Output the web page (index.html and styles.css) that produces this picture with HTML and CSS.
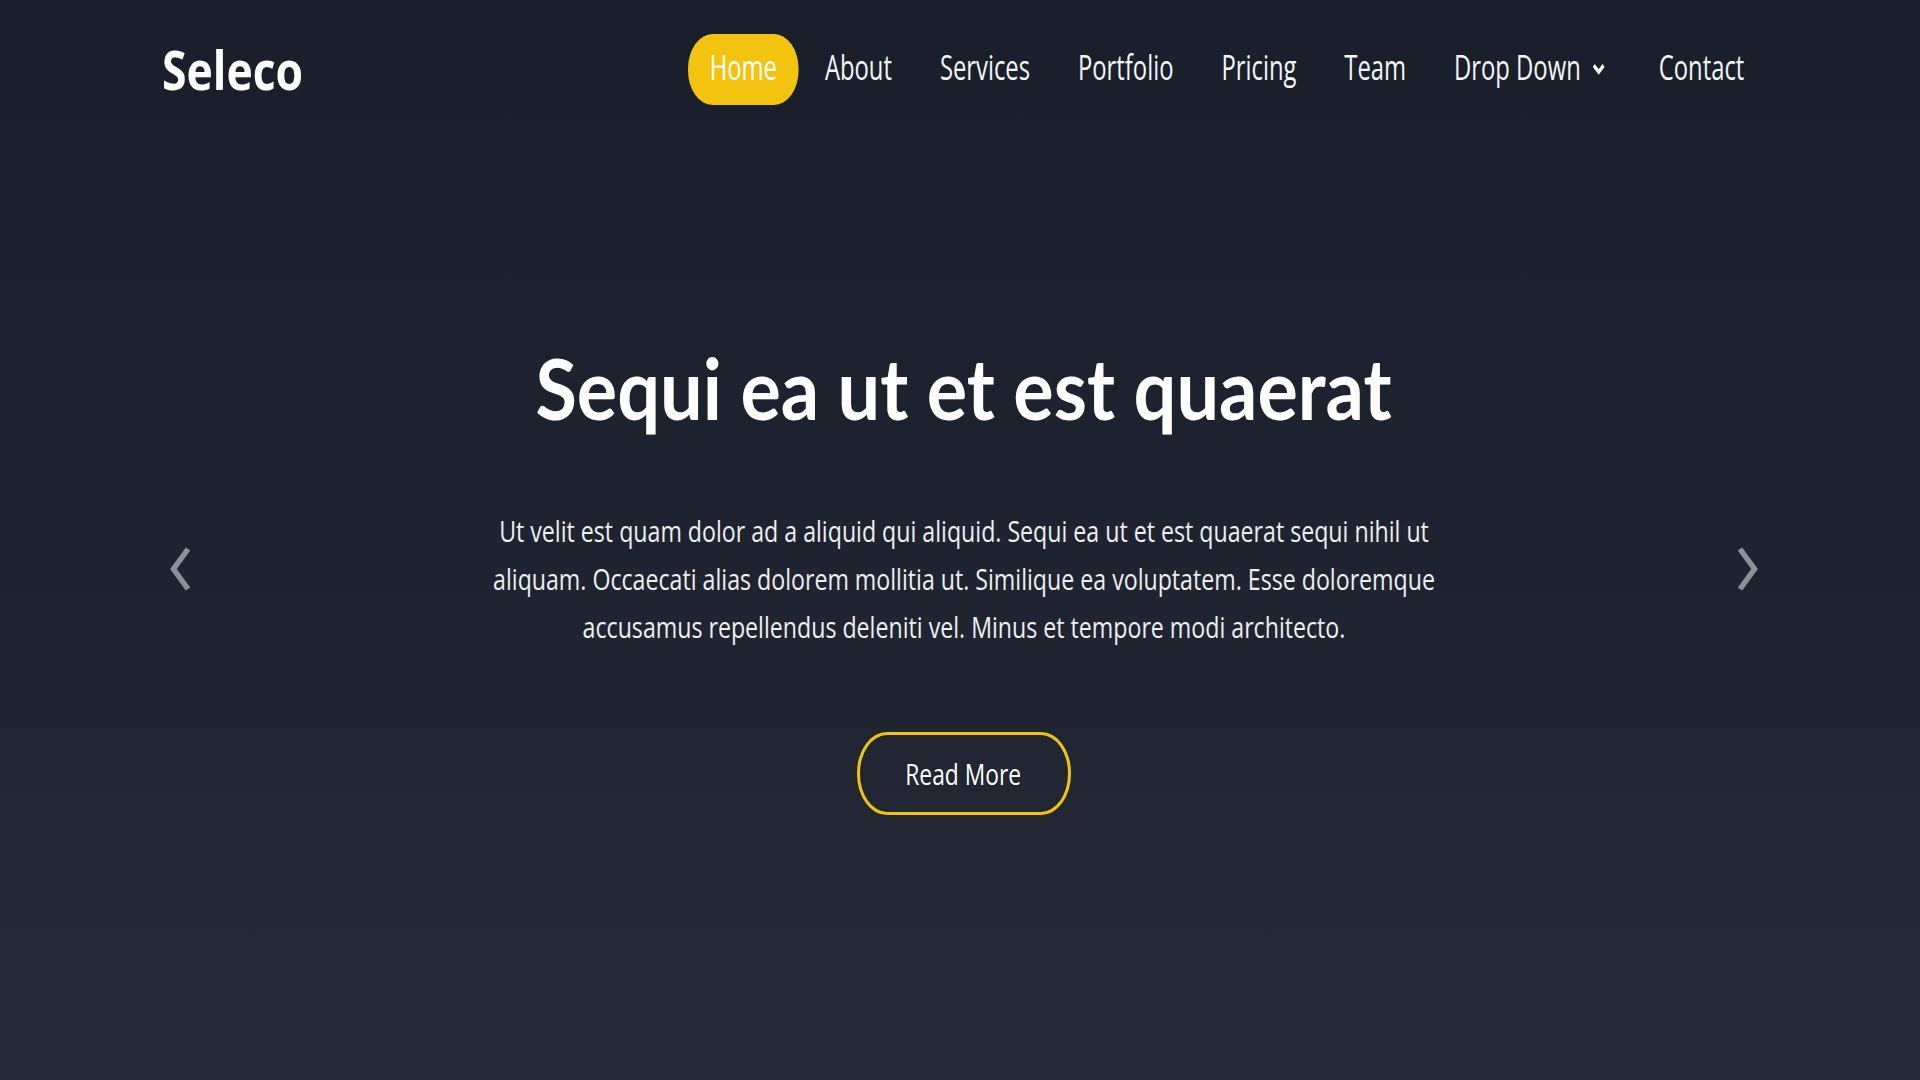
FILE: index.html
```html
<!DOCTYPE html>
<html lang="en">
<head>
<meta charset="utf-8">
<title>Seleco</title>
<link rel="stylesheet" href="styles.css">
</head>
<body>
<div class="page">
  <header class="topbar">
    <a class="logo" href="#"><span class="logo-text">Seleco</span></a>
    <nav class="menu">
      <ul class="menu-list">
        <li><a class="menu-link active" href="#">Home</a></li>
        <li><a class="menu-link" href="#">About</a></li>
        <li><a class="menu-link" href="#">Services</a></li>
        <li><a class="menu-link" href="#">Portfolio</a></li>
        <li><a class="menu-link" href="#">Pricing</a></li>
        <li><a class="menu-link" href="#">Team</a></li>
        <li><a class="menu-link dropdown" href="#">Drop Down<svg class="chev" viewBox="0 0 20 12" width="20" height="12"><path d="M3 2.5 L10 9 L17 2.5" fill="none" stroke="#ffffff" stroke-width="4"/></svg></a></li>
        <li><a class="menu-link" href="#">Contact</a></li>
      </ul>
    </nav>
  </header>

  <section class="hero">
    <a class="carousel-ctrl prev" href="#" aria-label="Previous">
      <svg viewBox="0 0 24 46" width="24" height="46"><path d="M20 3 L5.5 23 L20 43" fill="none" stroke="#8c9099" stroke-width="5.5"/></svg>
    </a>
    <a class="carousel-ctrl next" href="#" aria-label="Next">
      <svg viewBox="0 0 24 46" width="24" height="46"><path d="M4 3 L18.5 23 L4 43" fill="none" stroke="#8c9099" stroke-width="5.5"/></svg>
    </a>

    <div class="hero-content">
      <h1 class="hero-title">Sequi ea ut et est quaerat</h1>
      <p class="hero-text">Ut velit est quam dolor ad a aliquid qui aliquid. Sequi ea ut et est quaerat sequi nihil ut aliquam. Occaecati alias dolorem mollitia ut. Similique ea voluptatem. Esse doloremque accusamus repellendus deleniti vel. Minus et tempore modi architecto.</p>
      <a class="btn-read" href="#"><span class="btn-label">Read More</span></a>
    </div>
  </section>
</div>
</body>
</html>
```

FILE: styles.css
```css
html, body {
  margin: 0;
  padding: 0;
}

body {
  background: #1f2431;
  font-family: "Open Sans", "Liberation Sans", sans-serif;
  color: #ffffff;
  overflow: hidden;
}

.page {
  min-height: 1080px;
  background: linear-gradient(180deg, #181f2b 0%, #1e2330 50%, #262a37 100%);
}

a {
  text-decoration: none;
  color: inherit;
}

/* ---------- header ---------- */
.topbar {
  display: flex;
  align-items: center;
  padding: 34px 154px 0 162px;
}

.logo {
  flex: none;
  display: block;
}

.logo-text {
  display: inline-block;
  font-family: "Open Sans", sans-serif;
  font-weight: 700;
  font-size: 53px;
  line-height: 71px;
  color: #ffffff;
  transform: scaleX(0.84);
  transform-origin: left center;
}

.menu {
  flex: 1;
  min-width: 0;
  display: flex;
  justify-content: flex-end;
}

.menu-list {
  flex: none;
  display: flex;
  gap: 6.5px;
  list-style: none;
  margin: 0;
  padding: 0;
  transform: scaleX(0.7);
  transform-origin: right center;
}

.menu-link {
  display: flex;
  align-items: center;
  height: 71px;
  box-sizing: border-box;
  padding: 0 31px 5px;
  border-radius: 35px;
  font-size: 34px;
  line-height: 66px;
  color: #f4f5f7;
  white-space: nowrap;
}

.menu-link.active {
  background: #f2c40f;
  color: #ffffff;
}

.chev {
  margin-left: 16px;
  margin-right: 7px;
  margin-top: 4px;
}

/* ---------- hero ---------- */
.hero {
  position: relative;
  padding: 231px 0 100px;
}

.hero-content {
  text-align: center;
  padding-left: 7px;
}

.hero-title {
  margin: 0;
  font-family: Lato, "Open Sans", sans-serif;
  font-weight: 700;
  font-size: 85px;
  line-height: 1.2;
  color: #ffffff;
  transform: scaleX(0.89);
}

.hero-text {
  max-width: 1290px;
  margin: 69px auto 0;
  font-size: 30px;
  line-height: 48px;
  color: #eeeff1;
  transform: scaleX(0.772);
}

.btn-read {
  display: inline-flex;
  align-items: center;
  justify-content: center;
  box-sizing: border-box;
  width: 214px;
  height: 83px;
  margin-top: 81px;
  border: 3px solid #f2c40f;
  border-radius: 30px / 41px;
}

.btn-label {
  display: inline-block;
  font-size: 30px;
  line-height: 40px;
  color: #ffffff;
  transform: scaleX(0.76);
  white-space: nowrap;
}

.carousel-ctrl {
  position: absolute;
  top: 441px;
  display: block;
  width: 24px;
  height: 46px;
}

.carousel-ctrl svg {
  display: block;
}

.carousel-ctrl.prev {
  left: 168px;
}

.carousel-ctrl.next {
  right: 160px;
}
```
